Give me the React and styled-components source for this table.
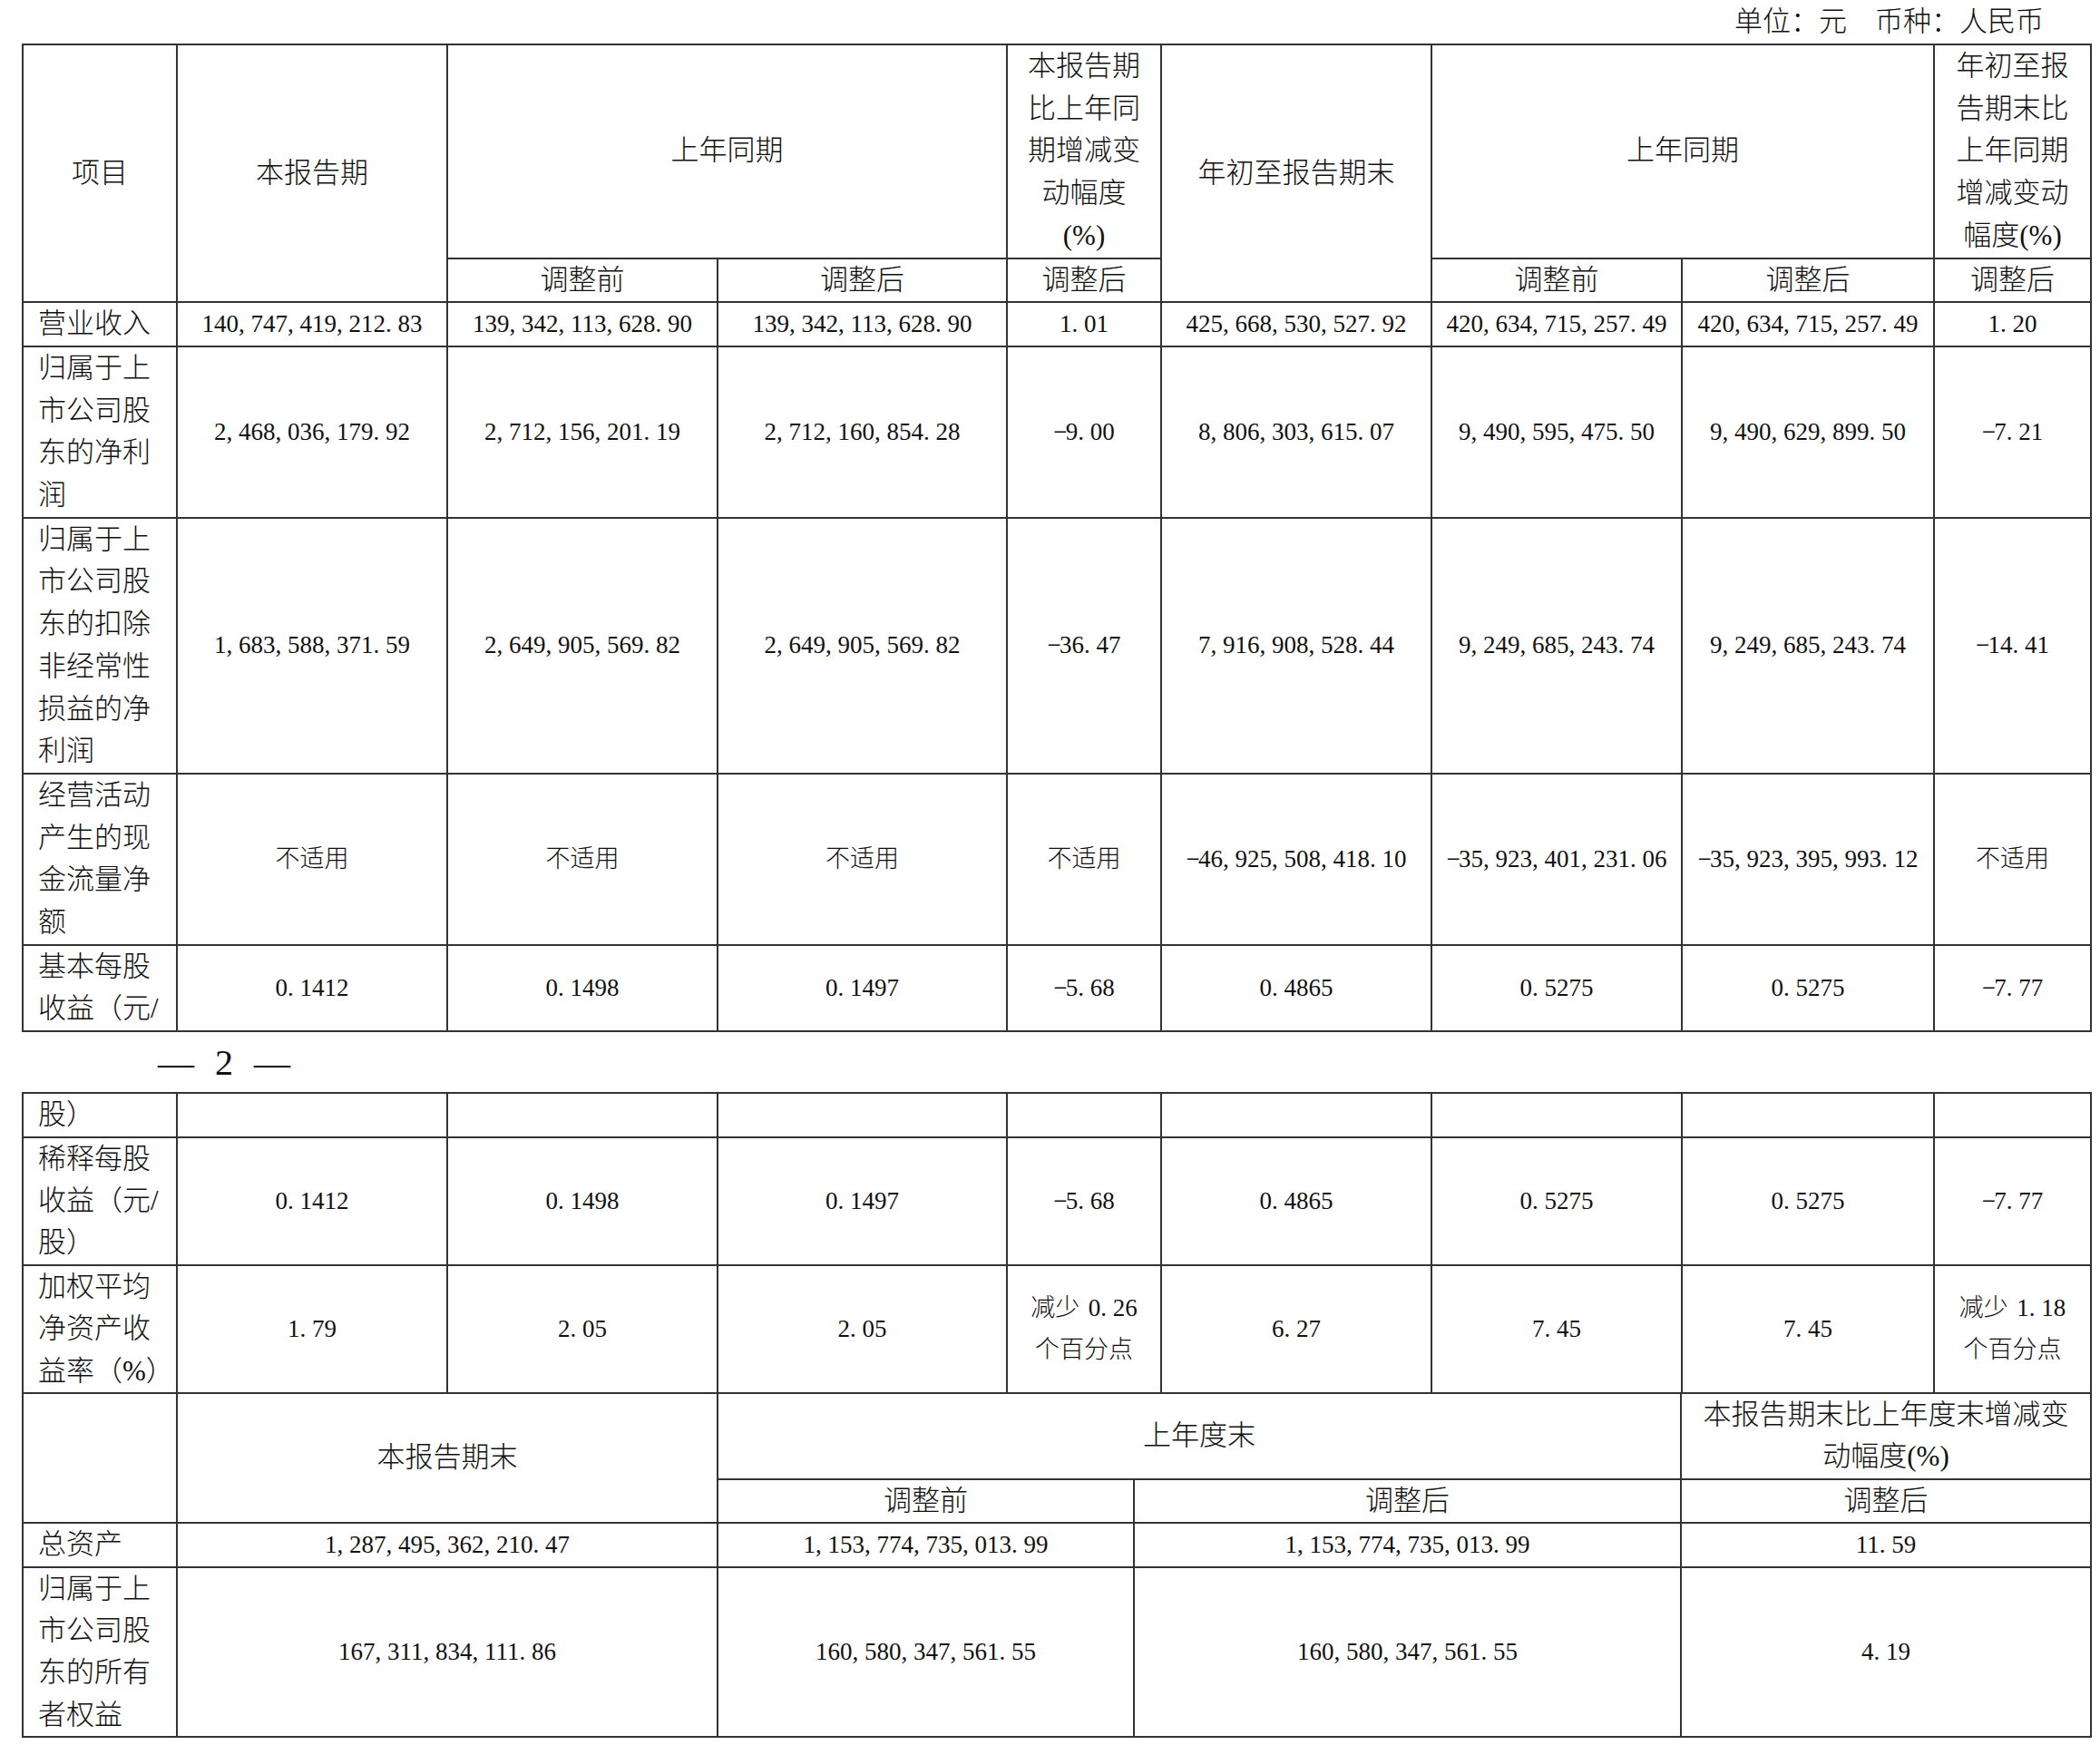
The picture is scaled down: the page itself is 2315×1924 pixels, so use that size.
import React from "react";
import styled, { createGlobalStyle } from "styled-components";

const GlobalStyle = createGlobalStyle`
  html, body { margin: 0; padding: 0; background: #ffffff; }
  body {
    font-family: "Liberation Serif", "Noto Sans CJK SC", serif;
    color: #111;
  }
`;

const Page = styled.div`
  width: 2315px;
  box-sizing: border-box;
  padding: 0 0 0 24px;
`;

const UnitLine = styled.div`
  height: 48px;
  line-height: 48px;
  font-size: 31px;
  font-weight: 300;
  text-align: right;
  padding-right: 62px;
  white-space: nowrap;
`;

const Table = styled.table`
  --lh: ${(p) => p.$lh || 46.4}px;
  border-collapse: collapse;
  table-layout: fixed;
  width: ${(p) => p.$w}px;
  margin-top: ${(p) => p.$mt || 0}px;
`;

const Cell = styled.td`
  border: 2px solid #333;
  padding: 0 0 0 ${(p) => (p.$left ? 16 : 0)}px;
  line-height: var(--lh);
  font-size: ${(p) => (p.$big ? 31 : 27)}px;
  font-weight: 300;
  text-align: ${(p) => (p.$left ? "left" : "center")};
  vertical-align: middle;
  white-space: nowrap;
  overflow: hidden;
`;

const Half = styled.span`
  display: inline-block;
  width: ${(p) => p.$w || 0.5}em;
  text-align: ${(p) => (p.$c ? "center" : "left")};
`;

const PageNum = styled.div`
  height: 64px;
  display: flex;
  align-items: center;
  gap: 23px;
  padding: 2px 0 0 150px;
  font-size: 40px;
  line-height: 1;
`;

const Num = ({ v }) => (
  <>
    {[...v].map((ch, i) => {
      if (ch === "-")
        return (
          <Half key={i} $c>
            {"\u2212"}
          </Half>
        );
      if (ch === " ")
        return (
          <Half key={i} $w={0.35}>
            {"\u00a0"}
          </Half>
        );
      if (ch === "," || ch === ".") return <Half key={i}>{ch}</Half>;
      return <React.Fragment key={i}>{ch}</React.Fragment>;
    })}
  </>
);

const Lines = ({ t }) => (
  <>
    {t.split("|").map((l, i, a) => (
      <React.Fragment key={i}>
        {l}
        {i < a.length - 1 && <br />}
      </React.Fragment>
    ))}
  </>
);

const cols1 = [170, 298, 298, 319, 170, 298, 276, 278, 173];
const cols2 = [170, 596, 459, 603, 452];

const Cols = ({ w }) => (
  <colgroup>
    {w.map((x, i) => (
      <col key={i} style={{ width: x }} />
    ))}
  </colgroup>
);

const rows1 = [
  ["营业收入", ["140,747,419,212.83", "139,342,113,628.90", "139,342,113,628.90", "1.01", "425,668,530,527.92", "420,634,715,257.49", "420,634,715,257.49", "1.20"]],
  ["归属于上|市公司股|东的净利|润", ["2,468,036,179.92", "2,712,156,201.19", "2,712,160,854.28", "-9.00", "8,806,303,615.07", "9,490,595,475.50", "9,490,629,899.50", "-7.21"]],
  ["归属于上|市公司股|东的扣除|非经常性|损益的净|利润", ["1,683,588,371.59", "2,649,905,569.82", "2,649,905,569.82", "-36.47", "7,916,908,528.44", "9,249,685,243.74", "9,249,685,243.74", "-14.41"]],
  ["经营活动|产生的现|金流量净|额", ["不适用", "不适用", "不适用", "不适用", "-46,925,508,418.10", "-35,923,401,231.06", "-35,923,395,993.12", "不适用"]],
  ["基本每股|收益（元/", ["0.1412", "0.1498", "0.1497", "-5.68", "0.4865", "0.5275", "0.5275", "-7.77"]],
];

const rows2 = [
  ["股）", ["", "", "", "", "", "", "", ""]],
  ["稀释每股|收益（元/|股）", ["0.1412", "0.1498", "0.1497", "-5.68", "0.4865", "0.5275", "0.5275", "-7.77"]],
  ["加权平均|净资产收|益率（%）", ["1.79", "2.05", "2.05", "减少 0.26|个百分点", "6.27", "7.45", "7.45", "减少 1.18|个百分点"]],
];

const rows3 = [
  ["总资产", ["1,287,495,362,210.47", "1,153,774,735,013.99", "1,153,774,735,013.99", "11.59"]],
  ["归属于上|市公司股|东的所有|者权益", ["167,311,834,111.86", "160,580,347,561.55", "160,580,347,561.55", "4.19"]],
];

const DataCell = ({ v }) => (
  <Cell>
    {v.split("|").map((l, i, a) => (
      <React.Fragment key={i}>
        <Num v={l} />
        {i < a.length - 1 && <br />}
      </React.Fragment>
    ))}
  </Cell>
);

const BodyRows = ({ rows }) =>
  rows.map(([label, vals], r) => (
    <tr key={r}>
      <Cell $left $big>
        <Lines t={label} />
      </Cell>
      {vals.map((v, i) => (
        <DataCell key={i} v={v} />
      ))}
    </tr>
  ));

export default function App() {
  return (
    <Page>
      <GlobalStyle />
      <UnitLine>单位：元　币种：人民币</UnitLine>

      <Table $w={2282} $lh={46.7}>
        <Cols w={cols1} />
        <tbody>
          <tr>
            <Cell $big rowSpan={2}>项目</Cell>
            <Cell $big rowSpan={2}>本报告期</Cell>
            <Cell $big colSpan={2}>上年同期</Cell>
            <Cell $big>
              <Lines t="本报告期|比上年同|期增减变|动幅度|(%)" />
            </Cell>
            <Cell $big rowSpan={2}>年初至报告期末</Cell>
            <Cell $big colSpan={2}>上年同期</Cell>
            <Cell $big>
              <Lines t="年初至报|告期末比|上年同期|增减变动|幅度(%)" />
            </Cell>
          </tr>
          <tr>
            <Cell $big>调整前</Cell>
            <Cell $big>调整后</Cell>
            <Cell $big>调整后</Cell>
            <Cell $big>调整前</Cell>
            <Cell $big>调整后</Cell>
            <Cell $big>调整后</Cell>
          </tr>
          <BodyRows rows={rows1} />
        </tbody>
      </Table>

      <PageNum>
        <span>—</span>
        <span>2</span>
        <span>—</span>
      </PageNum>

      <Table $w={2282} $lh={46.4}>
        <Cols w={cols1} />
        <tbody>
          <BodyRows rows={rows2} />
        </tbody>
      </Table>

      <Table $w={2282} $lh={46.4} $mt={-2}>
        <Cols w={cols2} />
        <tbody>
          <tr>
            <Cell $big rowSpan={2}></Cell>
            <Cell $big rowSpan={2}>本报告期末</Cell>
            <Cell $big colSpan={2}>上年度末</Cell>
            <Cell $big>
              <Lines t="本报告期末比上年度末增减变|动幅度(%)" />
            </Cell>
          </tr>
          <tr>
            <Cell $big>调整前</Cell>
            <Cell $big>调整后</Cell>
            <Cell $big>调整后</Cell>
          </tr>
          <BodyRows rows={rows3} />
        </tbody>
      </Table>
    </Page>
  );
}
